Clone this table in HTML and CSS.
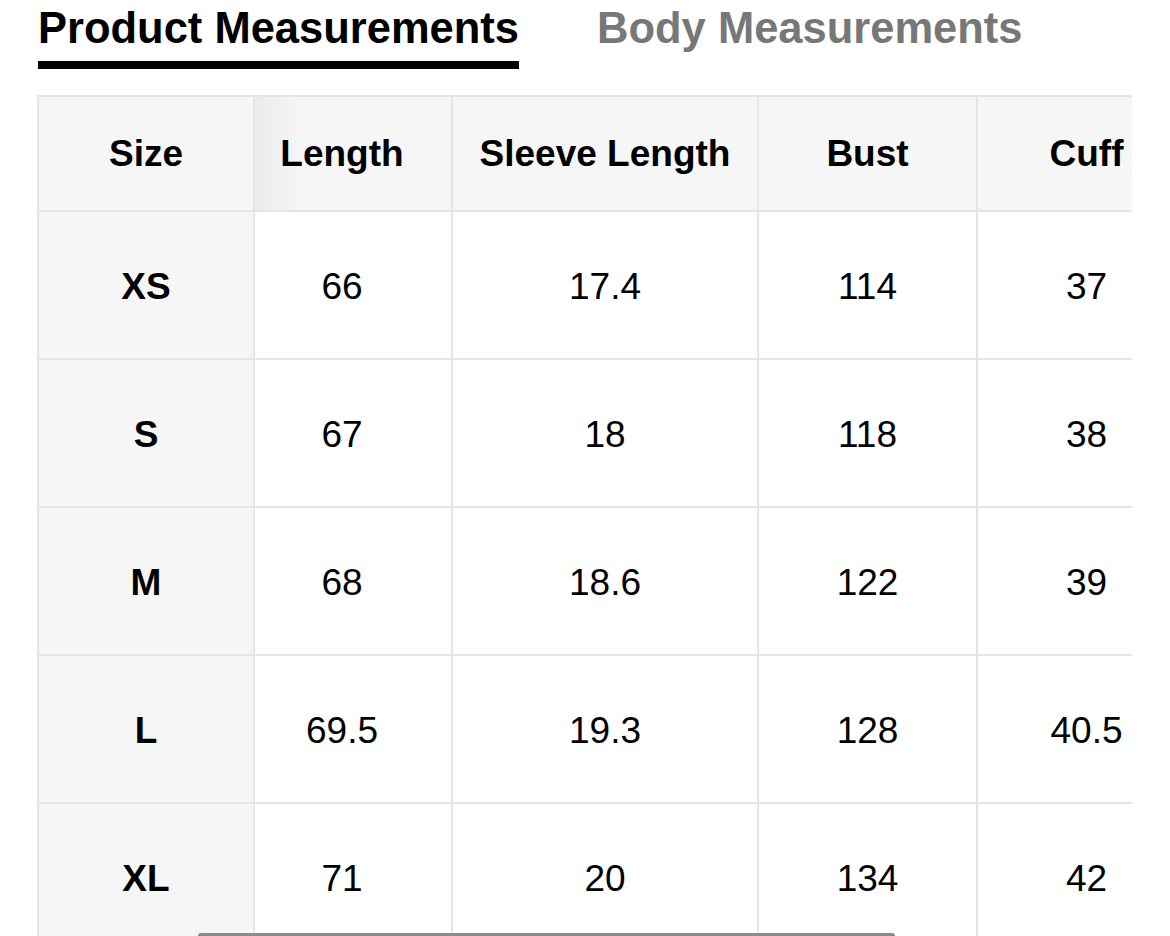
FILE: index.html
```html
<!DOCTYPE html>
<html lang="en">
<head>
<meta charset="utf-8">
<title>Size Guide</title>
<link rel="stylesheet" href="styles.css">
</head>
<body>
<div class="page">
  <nav class="tabs">
    <div class="tab tab-active">Product Measurements</div>
    <div class="tab">Body Measurements</div>
  </nav>
  <div class="table-wrap">
    <table class="sizes">
      <colgroup>
        <col class="c-size"><col class="c-len"><col class="c-sleeve"><col class="c-bust"><col class="c-cuff">
      </colgroup>
      <thead>
        <tr>
          <th class="sticky">Size</th>
          <th class="shade len">Length</th>
          <th>Sleeve Length</th>
          <th>Bust</th>
          <th>Cuff</th>
        </tr>
      </thead>
      <tbody>
        <tr><th class="sticky">XS</th><td class="shade len">66</td><td>17.4</td><td>114</td><td>37</td></tr>
        <tr><th class="sticky">S</th><td class="shade len">67</td><td>18</td><td>118</td><td>38</td></tr>
        <tr><th class="sticky">M</th><td class="shade len">68</td><td>18.6</td><td>122</td><td>39</td></tr>
        <tr><th class="sticky">L</th><td class="shade len">69.5</td><td>19.3</td><td>128</td><td>40.5</td></tr>
        <tr><th class="sticky">XL</th><td class="shade len">71</td><td>20</td><td>134</td><td>42</td></tr>
      </tbody>
    </table>
  </div>
  <div class="scrollbar"></div>
</div>
</body>
</html>
```
FILE: styles.css
```css
html, body {
  margin: 0;
  padding: 0;
  overflow: hidden;
  background: #fff;
}
body {
  font-family: "Liberation Sans", Arial, Helvetica, sans-serif;
  color: #000;
}
.page {
  position: relative;
  width: 1170px;
  height: 936px;
  overflow: hidden;
}
.tabs {
  display: flex;
  gap: 78px;
  padding: 3px 0 0 38px;
}
.tab {
  font-size: 43.5px;
  font-weight: 700;
  line-height: 50px;
  color: #777;
  padding-bottom: 8px;
  border-bottom: 8px solid transparent;
}
.tab-active {
  color: #000;
  border-bottom-color: #000;
}
.table-wrap {
  margin: 26px 0 0 37px;
  width: 1095px;
  overflow: hidden;
}
.sizes {
  border-collapse: collapse;
  table-layout: fixed;
  width: 1158px;
  border: 2px solid #ebebeb;
}
.c-size { width: 216px; }
.c-len { width: 198px; }
.c-sleeve { width: 306px; }
.c-bust { width: 219px; }
.c-cuff { width: 219px; }
.sizes th, .sizes td {
  border: 2px solid #e5e5e5;
  text-align: center;
  vertical-align: middle;
  font-size: 37px;
  padding: 0;
}
.sizes thead th {
  height: 113px;
  font-weight: 700;
  background: #f6f6f6;
}
.sizes tbody tr {
  height: 148px;
}
.sizes td {
  font-weight: 400;
  padding-top: 3px;
  background: #fff;
}
.sizes tbody th {
  font-weight: 700;
  padding-top: 3px;
}
.sticky {
  background: #f6f6f6;
}
.shade {
  background: linear-gradient(to right, rgba(0, 0, 0, 0.055), rgba(0, 0, 0, 0) 48px), #fff;
}
.sizes thead th.shade {
  background: linear-gradient(to right, rgba(0, 0, 0, 0.045), rgba(0, 0, 0, 0) 48px), #f6f6f6;
}
.sizes th.len,
.sizes td.len {
  padding-right: 22px;
}
.scrollbar {
  position: absolute;
  left: 198px;
  top: 933px;
  width: 697px;
  height: 7px;
  border-radius: 3px;
  background: #8c8c8c;
}
```
